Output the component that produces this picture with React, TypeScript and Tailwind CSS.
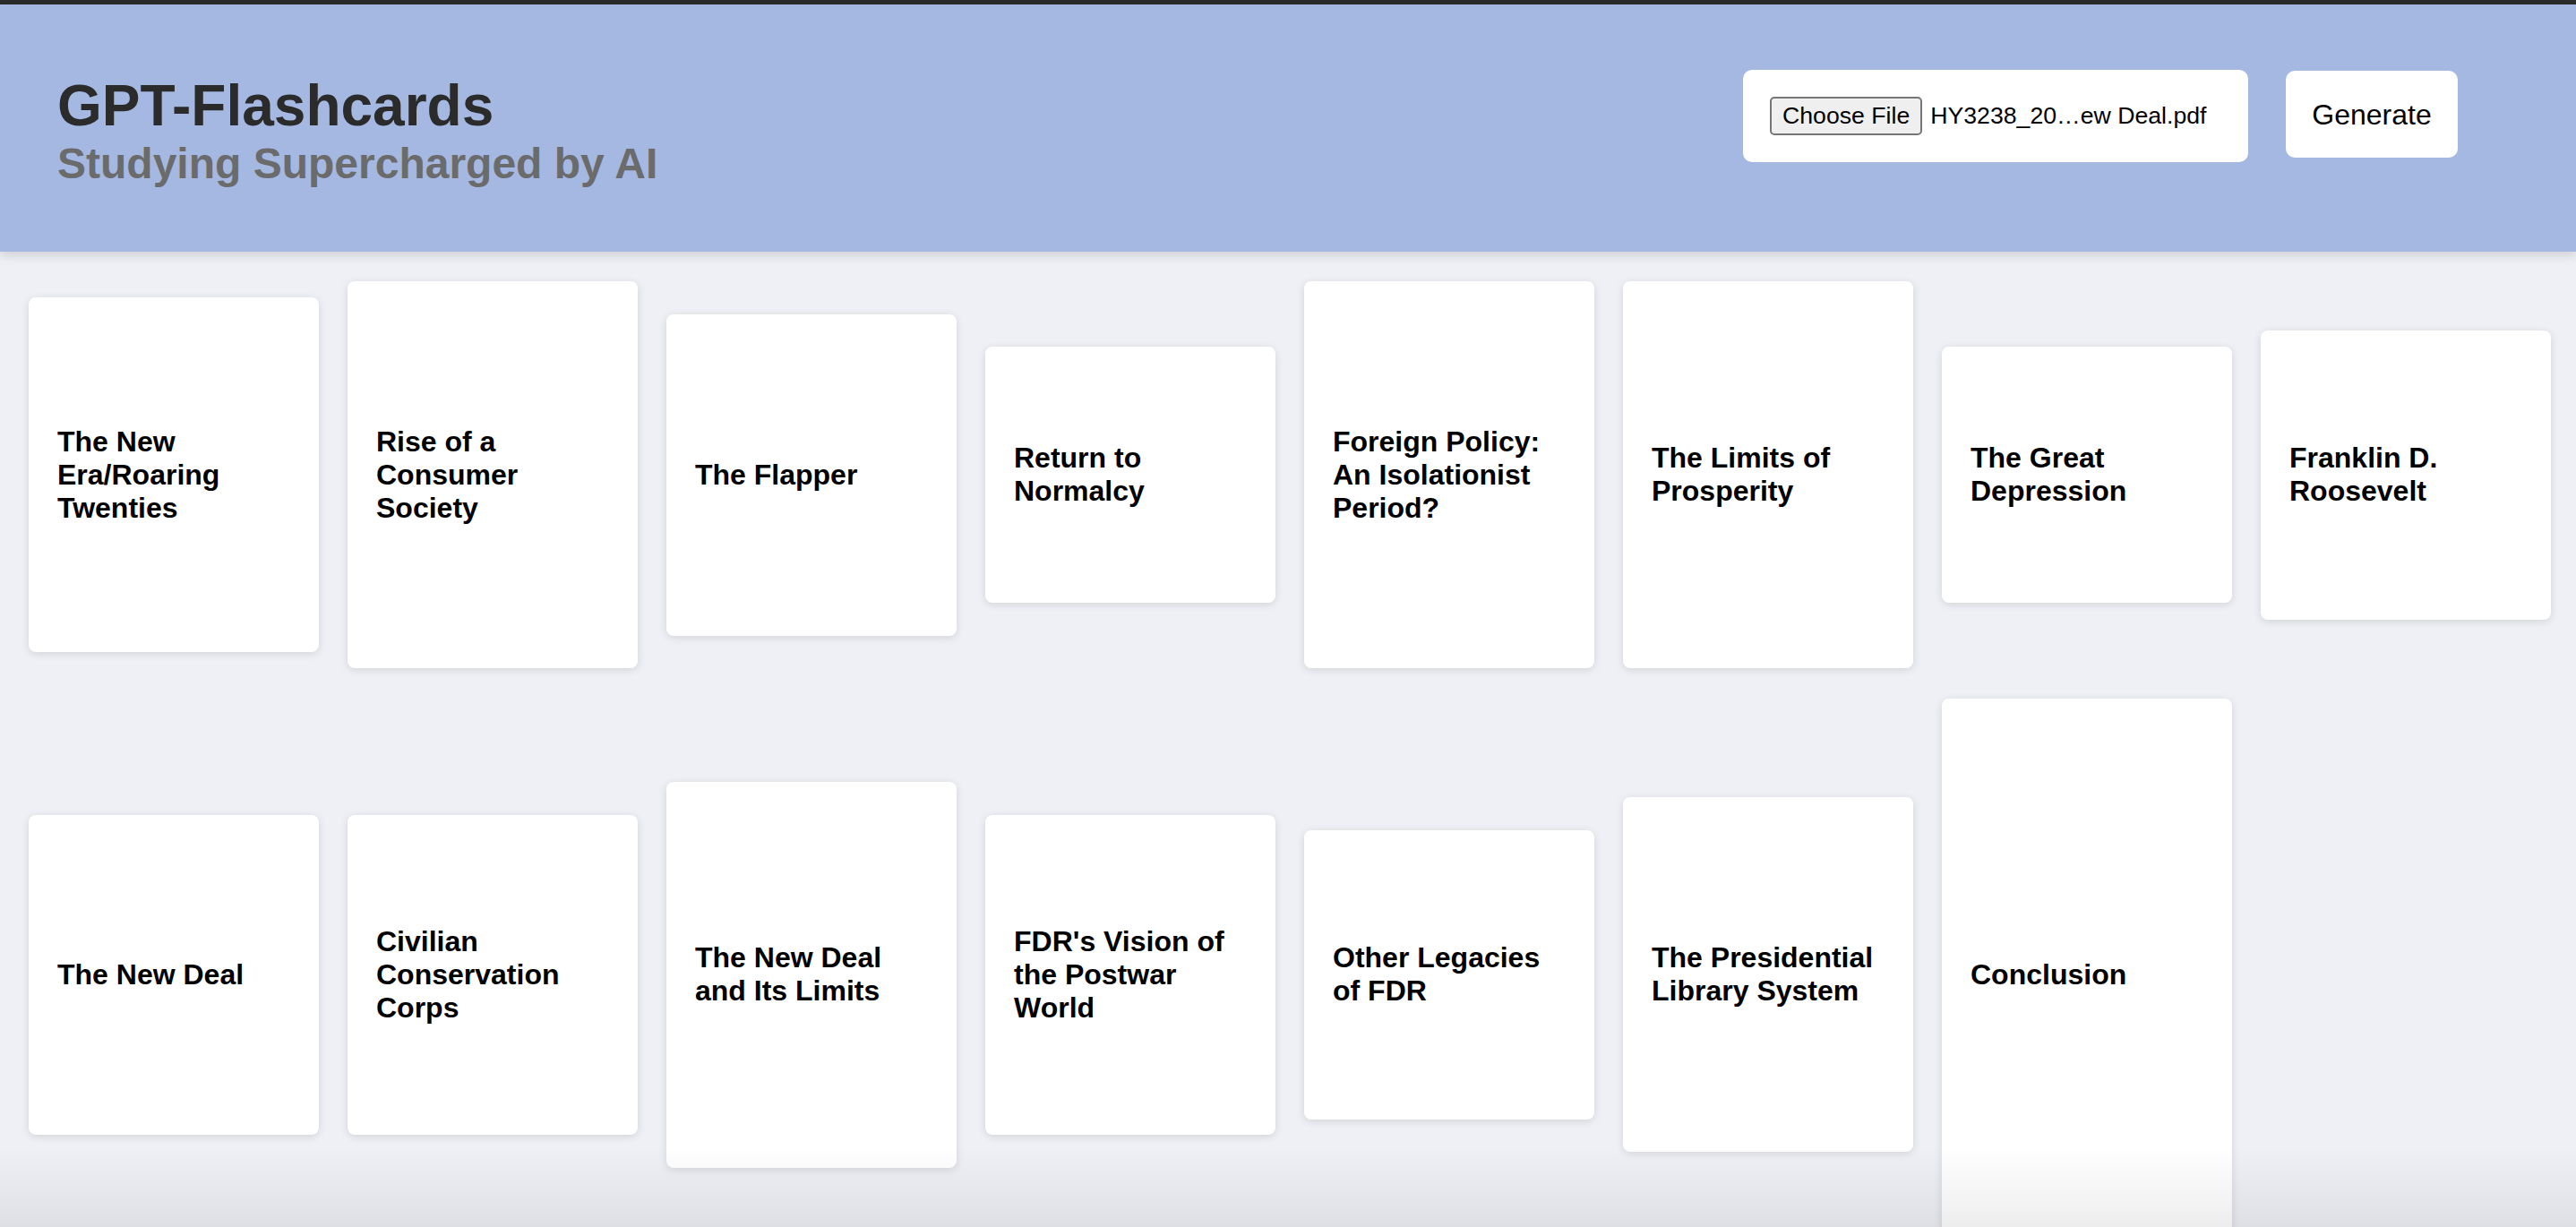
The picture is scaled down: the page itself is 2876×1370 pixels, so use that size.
import React from "react";

type Card = { title: string; h: number };

// row 1 then row 2, heights taken from the reference
const cards: Card[] = [
  { title: "The New Era/Roaring Twenties", h: 396 },
  { title: "Rise of a Consumer Society", h: 432 },
  { title: "The Flapper", h: 359 },
  { title: "Return to Normalcy", h: 286 },
  { title: "Foreign Policy: An Isolationist Period?", h: 432 },
  { title: "The Limits of Prosperity", h: 432 },
  { title: "The Great Depression", h: 286 },
  { title: "Franklin D. Roosevelt", h: 323 },
  { title: "The New Deal", h: 357 },
  { title: "Civilian Conservation Corps", h: 357 },
  { title: "The New Deal and Its Limits", h: 431 },
  { title: "FDR's Vision of the Postwar World", h: 357 },
  { title: "Other Legacies of FDR", h: 323 },
  { title: "The Presidential Library System", h: 396 },
  { title: "Conclusion", h: 616 },
];

function Flashcard({ title, h }: Card) {
  return (
    <div
      className="w-[324px] flex items-center px-[32px] bg-white rounded-[8px] shadow-[0_2px_10px_rgba(0,0,0,0.12)]"
      style={{ height: h }}
    >
      <p className="text-[32px] font-bold leading-[normal] text-black">{title}</p>
    </div>
  );
}

function FilePicker() {
  return (
    <div className="w-[564px] h-[103px] bg-white rounded-[10px] flex items-center pl-[30px] text-[26.67px] text-black">
      <span className="h-[43px] px-[12px] flex items-center bg-[#efefef] border-2 border-[#767676] rounded-[5px] leading-none">
        Choose File
      </span>
      <span className="ml-[9px] leading-none">HY3238_20…ew Deal.pdf</span>
    </div>
  );
}

export default function App() {
  return (
    <div className="relative h-[1370px] overflow-hidden bg-[#eff0f5] font-['Liberation_Sans',Arial,sans-serif]">
      <div className="h-[5px] bg-[#2b2b2b]" />

      <header className="relative z-10 h-[276px] flex items-start justify-between px-[64px] bg-[#a4b8e2] shadow-[0_4px_12px_rgba(0,0,0,0.14)]">
        <div className="mt-[76px]">
          <h1 className="text-[64px] font-bold leading-[normal] text-[#2b2b2b]">
            GPT-Flashcards
          </h1>
          <h2 className="text-[48px] font-bold leading-[normal] text-[#6b6b6b]">
            Studying Supercharged by AI
          </h2>
        </div>
        <div className="mt-[73px] mr-[68px] flex items-start gap-[42px]">
          <FilePicker />
          <button className="mt-[1px] w-[192px] h-[97px] bg-white rounded-[10px] text-[32px] text-black">
            Generate
          </button>
        </div>
      </header>

      <main className="flex flex-wrap items-center gap-x-[32px] gap-y-[34px] pl-[32px] pt-[33px]">
        {cards.map((c) => (
          <Flashcard key={c.title} {...c} />
        ))}
      </main>

      {/* window bottom shading */}
      <div className="pointer-events-none absolute inset-x-0 bottom-0 h-[90px] bg-linear-to-b from-transparent to-[rgba(0,0,0,0.07)]" />
    </div>
  );
}
